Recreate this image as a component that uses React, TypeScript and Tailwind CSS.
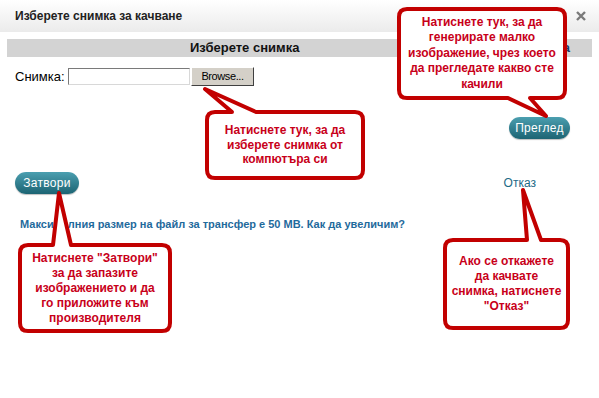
import React from 'react';

type Tail = { side: 'top' | 'bottom'; a: number; b: number; tx: number; ty: number };

// outline of a rounded box with a pointer, in page coordinates
const calloutPath = (x: number, y: number, w: number, h: number, t: Tail) => {
  const r = 8;
  const R = x + w;
  const B = y + h;
  if (t.side === 'top') {
    return `M${x + r},${y} H${t.a} L${t.tx},${t.ty} L${t.b},${y} H${R - r} Q${R},${y} ${R},${y + r} V${B - r} Q${R},${B} ${R - r},${B} H${x + r} Q${x},${B} ${x},${B - r} V${y + r} Q${x},${y} ${x + r},${y} Z`;
  }
  return `M${x + r},${y} H${R - r} Q${R},${y} ${R},${y + r} V${B - r} Q${R},${B} ${R - r},${B} H${t.b} L${t.tx},${t.ty} L${t.a},${B} H${x + r} Q${x},${B} ${x},${B - r} V${y + r} Q${x},${y} ${x + r},${y} Z`;
};

const callouts = [
  {
    box: [399, 9, 166, 89] as const,
    tail: { side: 'bottom', a: 508, b: 530, tx: 546, ty: 116 } as Tail,
    lines: ['Натиснете тук, за да', 'генерирате малко', 'изображение, чрез което', 'да прегледате какво сте', 'качили'],
    lh: 'leading-[15.5px]',
  },
  {
    box: [207, 112, 156, 66] as const,
    tail: { side: 'top', a: 232, b: 256, tx: 205, ty: 89 } as Tail,
    lines: ['Натиснете тук, за да', 'изберете снимка от', 'компютъра си'],
    lh: 'leading-[14.5px]',
  },
  {
    box: [20, 245, 150, 86] as const,
    tail: { side: 'top', a: 53, b: 71, tx: 59, ty: 193 } as Tail,
    lines: ['Натиснете "Затвори"', 'за да запазите', 'изображението и да', 'го приложите към', 'производителя'],
    lh: 'leading-[15px]',
  },
  {
    box: [445, 240, 123, 88] as const,
    tail: { side: 'top', a: 527, b: 541, tx: 523, ty: 190 } as Tail,
    lines: ['Ако се откажете', 'да качвате', 'снимка, натиснете', '"Отказ"'],
    lh: 'leading-[15px]',
  },
];

const tealBtn =
  'h-[22px] rounded-full bg-gradient-to-b from-[#4b9fb0] to-[#1c6473] text-white text-[12px] tracking-[0.3px] flex items-center justify-center shadow-[0_1px_1px_rgba(0,0,0,0.25)]';

export default function App() {
  return (
    <div className="relative w-[599px] h-[398px] bg-white overflow-hidden font-['Liberation_Sans',Arial,sans-serif] text-black">
      {/* Header */}
      <div className="h-[32px] bg-gradient-to-b from-white to-[#ebebeb] flex items-center justify-between pl-[15px] pr-[13px]">
        <span className="text-[12px] font-bold text-[#222]">Изберете снимка за качване</span>
        <svg width="10" height="10" viewBox="0 0 10 10">
          <path d="M1 1 L9 9 M9 1 L1 9" stroke="#7a7a7a" strokeWidth="2.4" />
        </svg>
      </div>

      {/* Body */}
      <div className="px-[7px] pt-[7px]">
        <div className="h-[18px] bg-[#d3d3d3] relative">
          <span className="absolute left-[183px] top-0 leading-[18px] text-[13px] font-bold text-[#111]">
            Изберете снимка
          </span>
          <span className="absolute right-[22px] top-0 leading-[18px] text-[13px] font-bold text-[#1a3d6b]">ка</span>
        </div>

        <div className="flex items-center mt-[10px] pl-[8px] h-[19px]">
          <span className="text-[13px] w-[53px]">Снимка:</span>
          <div className="w-[122px] h-[17px] bg-white border border-[#7a7a7a] border-r-[#d8d8d8] border-b-[#d8d8d8]" />
          <div className="ml-[1px] w-[63px] h-[19px] bg-[#d4d0c8] border border-t-white border-l-white border-r-[#404040] border-b-[#404040] flex items-center justify-center text-[11px] tracking-[-0.4px]">
            Browse...
          </div>
        </div>

        <div className="flex justify-end mt-[31px] pr-[22px]">
          <div className={`${tealBtn} w-[61px]`}>Преглед</div>
        </div>

        <div className="flex items-center justify-between mt-[33px] pl-[8px] pr-[56px]">
          <div className={`${tealBtn} w-[64px] h-[21px]`}>Затвори</div>
          <span className="text-[12px] text-[#1d6a86]">Отказ</span>
        </div>

        <div className="mt-[22px] pl-[13px] text-[11px] font-bold text-[#1f6a9c]">
          Максималния размер на файл за трансфер е 50 MB. Как да увеличим?
        </div>
      </div>

      {/* Callout outlines */}
      <svg className="absolute left-0 top-0 pointer-events-none" width="599" height="398">
        {callouts.map((c, i) => (
          <path
            key={i}
            d={calloutPath(c.box[0], c.box[1], c.box[2], c.box[3], c.tail)}
            fill="white"
            stroke="#c20000"
            strokeWidth="4"
            strokeLinejoin="round"
          />
        ))}
      </svg>

      {/* Callout text */}
      {callouts.map((c, i) => (
        <div
          key={i}
          className={`absolute flex flex-col items-center justify-center text-center text-[12px] font-bold text-[#c8001a] ${c.lh}`}
          style={{ left: c.box[0], top: c.box[1], width: c.box[2], height: c.box[3] }}
        >
          {c.lines.map((l, j) => (
            <span key={j} className="whitespace-nowrap">
              {l}
            </span>
          ))}
        </div>
      ))}
    </div>
  );
}
